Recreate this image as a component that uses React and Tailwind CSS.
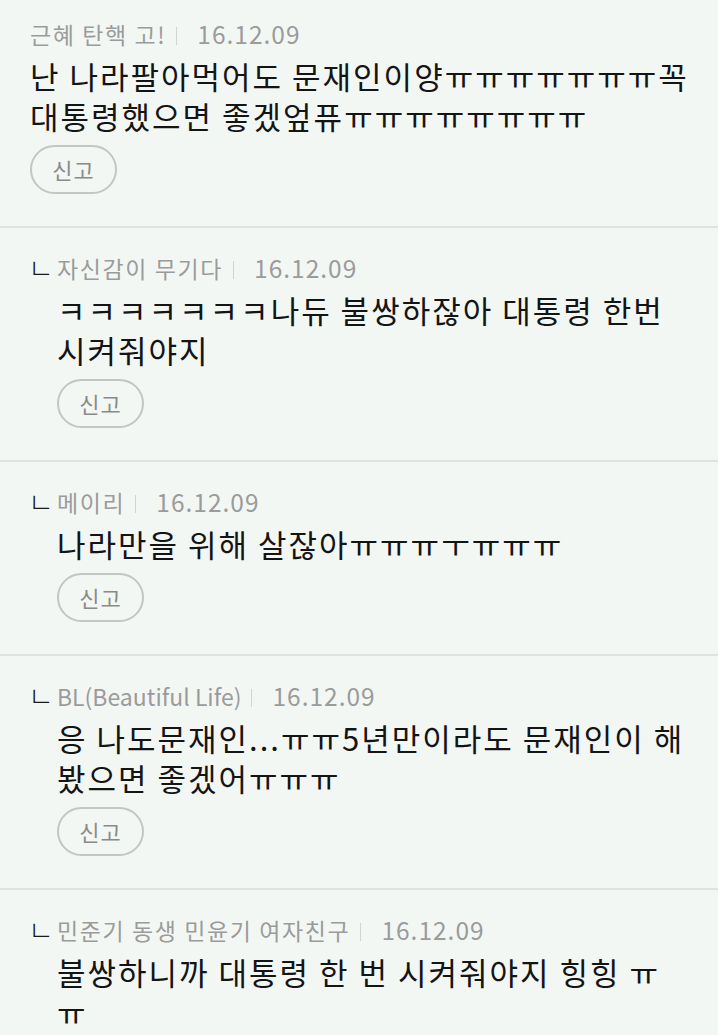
const comments = [
  {
    reply: false,
    name: '근혜 탄핵 고!',
    date: '16.12.09',
    lines: ['난 나라팔아먹어도 문재인이양ㅠㅠㅠㅠㅠㅠㅠ꼭', '대통령했으면 좋겠엎퓨ㅠㅠㅠㅠㅠㅠㅠㅠ'],
  },
  {
    reply: true,
    name: '자신감이 무기다',
    date: '16.12.09',
    lines: ['ㅋㅋㅋㅋㅋㅋㅋ나듀 불쌍하잖아 대통령 한번', '시켜줘야지'],
  },
  {
    reply: true,
    name: '메이리',
    date: '16.12.09',
    lines: ['나라만을 위해 살잖아ㅠㅠㅠㅜㅠㅠㅠ'],
  },
  {
    reply: true,
    name: 'BL(Beautiful Life)',
    latin: true,
    date: '16.12.09',
    lines: ['응 나도문재인...ㅠㅠ5년만이라도 문재인이 해', '봤으면 좋겠어ㅠㅠㅠ'],
  },
  {
    reply: true,
    name: '민준기 동생 민윤기 여자친구',
    date: '16.12.09',
    lines: ['불쌍하니까 대통령 한 번 시켜줘야지 힝힝 ㅠ', 'ㅠ'],
    noButton: true,
  },
];

function Comment({ c, first }) {
  return (
    <div
      className={`border-b-2 border-[#dfe3df] pr-[20px] ${
        first ? 'pt-[18px]' : 'pt-[24px]'
      } ${c.noButton ? 'pb-[20px]' : 'pb-[32px]'} ${c.reply ? 'pl-[28px]' : 'pl-[30px]'}`}
    >
      <div className="flex items-center h-[32px] leading-[32px] text-[#9b9b9b]">
        {c.reply && (
          <span className="w-[29px] text-[28px] font-light text-[#1a1a1a] leading-[32px] mt-[-2px]">ㄴ</span>
        )}
        <span className={`text-[23px] ${c.latin ? 'tracking-normal' : 'tracking-[1.6px]'}`}>{c.name}</span>
        <span className="ml-[10px] h-[18px] w-[1px] bg-[#d3d3d3] mt-[4px]" />
        <span className="ml-[20px] text-[24.5px] tracking-[1px]">{c.date}</span>
      </div>
      <div className={c.reply ? 'pl-[29px]' : ''}>
        <p className="mt-[6px] text-[31px] leading-[40px] tracking-[2px] text-[#141414] whitespace-nowrap">
          {c.lines.map((l, i) => (
            <span key={i} className="block">
              {l}
            </span>
          ))}
        </p>
        {!c.noButton && (
          <div className="mt-[9px]">
            <span className="inline-flex items-center justify-center w-[87px] h-[49px] rounded-full border-2 border-[#c3c6c3] text-[22px] tracking-[1px] text-[#8a8a8a]">
              신고
            </span>
          </div>
        )}
      </div>
    </div>
  );
}

export default function App() {
  return (
    <div
      className="w-[718px] h-[1035px] overflow-hidden bg-[#f3f7f4]"
      style={{ fontFamily: '"Noto Sans CJK KR", "Noto Sans", sans-serif' }}
    >
      {comments.map((c, i) => (
        <Comment key={i} c={c} first={i === 0} />
      ))}
    </div>
  );
}
